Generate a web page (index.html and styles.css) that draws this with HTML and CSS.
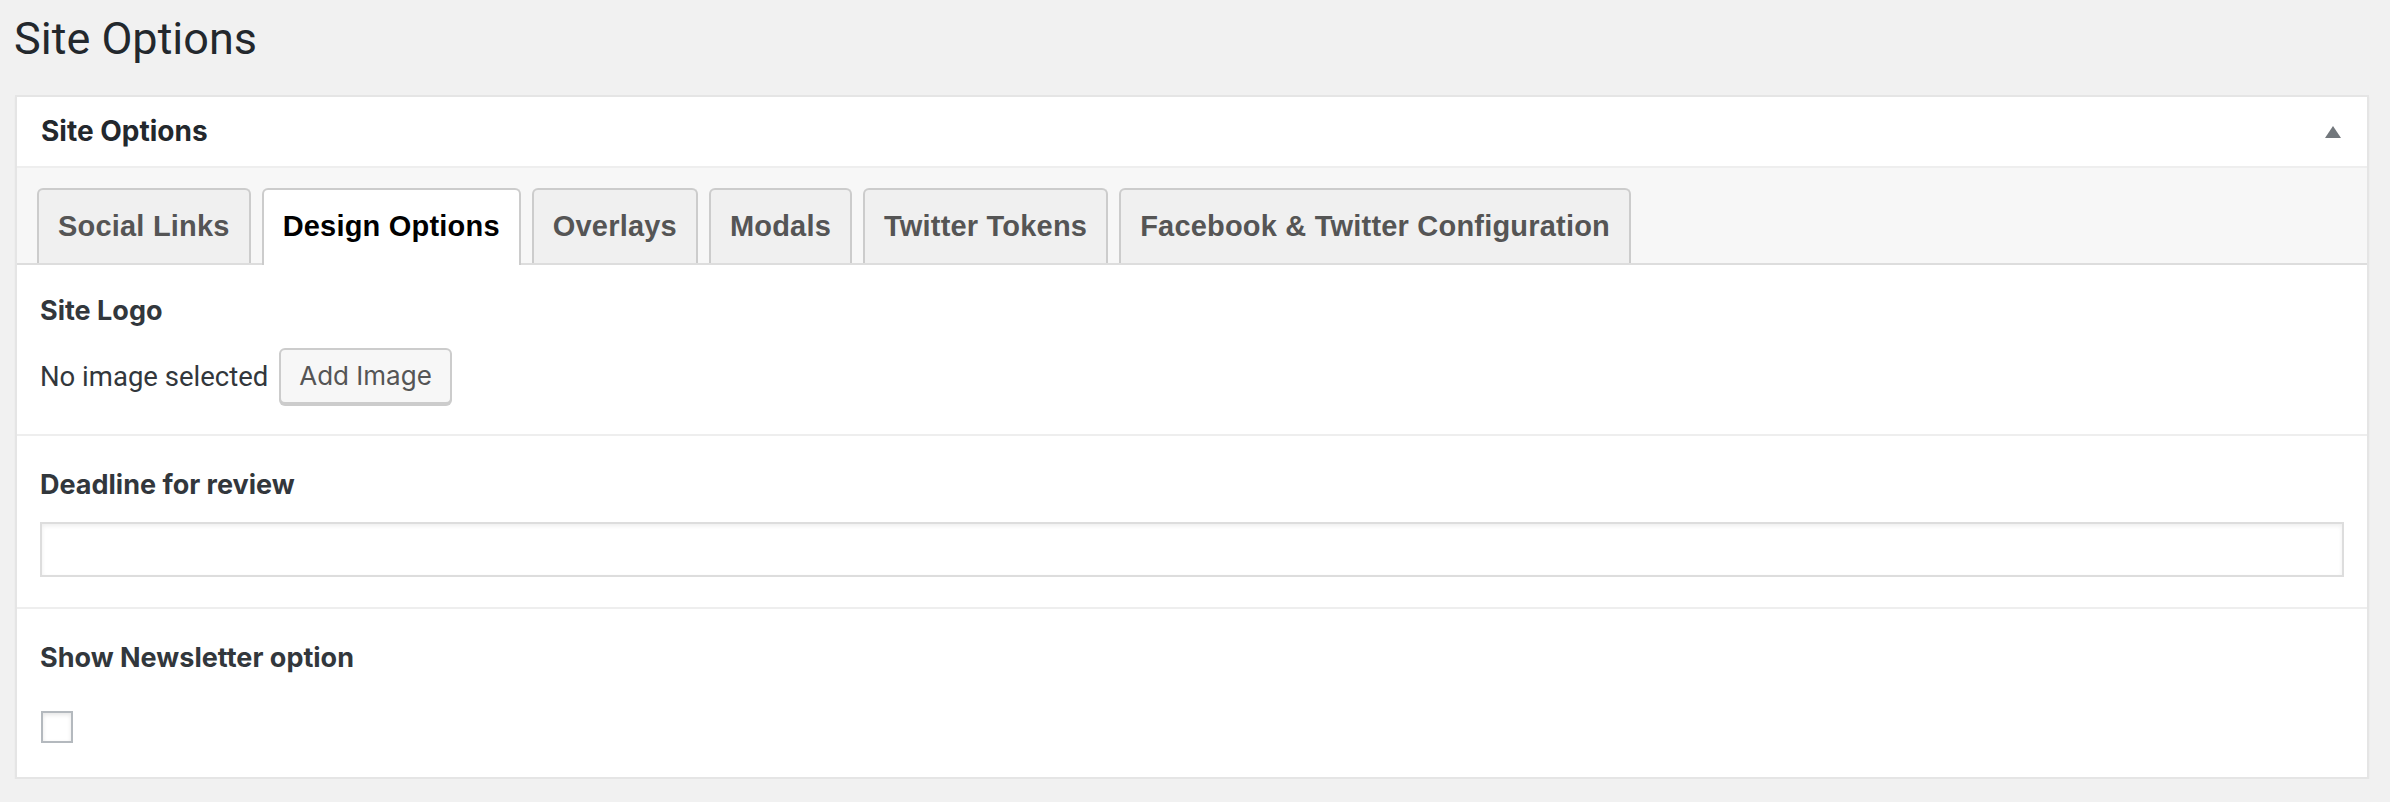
FILE: index.html
```html
<!DOCTYPE html>
<html lang="en">
<head>
<meta charset="utf-8">
<title>Site Options</title>
<link rel="stylesheet" href="styles.css">
</head>
<body>
<div class="wrap">
  <h1 class="page-title">Site Options</h1>
  <div class="postbox">
    <div class="postbox-header">
      <h2 class="hndle">Site Options</h2>
      <svg class="toggle" width="16" height="12" viewBox="0 0 16 12" aria-hidden="true"><polygon points="8,0 16,12 0,12" fill="#72777c"/></svg>
    </div>
    <div class="tabs">
      <span class="tab">Social Links</span>
      <span class="tab tab-active">Design Options</span>
      <span class="tab">Overlays</span>
      <span class="tab">Modals</span>
      <span class="tab">Twitter Tokens</span>
      <span class="tab">Facebook &amp; Twitter Configuration</span>
    </div>
    <div class="field field-first">
      <label class="field-label">Site Logo</label>
      <div class="media-row">
        <span class="media-status">No image selected</span>
        <button class="button" type="button">Add Image</button>
      </div>
    </div>
    <div class="field field-text">
      <label class="field-label">Deadline for review</label>
      <input class="text-input" type="text">
    </div>
    <div class="field field-check">
      <label class="field-label">Show Newsletter option</label>
      <input class="checkbox" type="checkbox">
    </div>
  </div>
</div>
</body>
</html>
```
FILE: styles.css
```css
* { box-sizing: border-box; }
html, body { margin: 0; padding: 0; }
body {
  background: #f1f1f1;
  font-family: Inter, "Liberation Sans", Arial, sans-serif;
  color: #444;
}
.wrap {
  padding: 9px 21px 0 15px;
}
.page-title {
  margin: 0 0 26px -1px;
  font-family: Roboto, "Liberation Sans", Arial, sans-serif;
  font-size: 45px;
  line-height: 60px;
  font-weight: 400;
  color: #23282d;
}
.postbox {
  background: #fff;
  border: 2px solid #e5e5e5;
  box-shadow: 0 2px 2px rgba(0,0,0,.04);
}
.postbox-header {
  display: flex;
  align-items: center;
  justify-content: space-between;
  height: 71px;
  padding: 0 26px 0 24px;
  border-bottom: 2px solid #eee;
}
.hndle {
  margin: 0;
  font-size: 28px;
  line-height: 69px;
  font-weight: 700;
  color: #23282d;
}
.toggle { display: block; margin-top: 1px; }
.tabs {
  display: flex;
  align-items: flex-end;
  gap: 11px;
  padding: 20px 0 0 20px;
  background: #f7f7f7;
  border-bottom: 2px solid #ddd;
}
.tab {
  display: block;
  height: 75px;
  padding: 0 19px;
  border: 2px solid #ccc;
  border-bottom: 0;
  border-radius: 6px 6px 0 0;
  background: #f0f0f0;
  font-family: "Liberation Sans", Arial, sans-serif;
  font-size: 29px;
  letter-spacing: 0.2px;
  line-height: 73px;
  font-weight: 700;
  color: #555;
  white-space: nowrap;
}
.tab-active {
  height: 77px;
  margin-bottom: -2px;
  background: #fff;
  color: #000;
}
.field {
  padding: 29px 23px 30px;
  border-top: 2px solid #eee;
}
.field-first {
  border-top: 0;
  padding-top: 26px;
  padding-bottom: 28px;
}
.field-check { padding-bottom: 34px; }
.field-label {
  display: block;
  font-size: 27px;
  line-height: 40px;
  font-weight: 700;
  color: #32373c;
}
.media-row {
  display: flex;
  align-items: center;
  gap: 11px;
  margin-top: 17px;
}
.media-status {
  font-family: Roboto, "Liberation Sans", Arial, sans-serif;
  font-size: 27.5px;
  line-height: 40px;
  color: #32373c;
}
.button {
  height: 56px;
  padding: 0 18px;
  border: 2px solid #ccc;
  border-radius: 6px;
  background: #f7f7f7;
  box-shadow: 0 2px 0 #ccc;
  font-family: inherit;
  font-size: 26px;
  line-height: 50px;
  color: #555;
  margin-bottom: 2px;
}
.text-input {
  display: block;
  width: 100%;
  height: 55px;
  margin-top: 17px;
  border: 2px solid #ddd;
  border-radius: 0;
  background: #fff;
  box-shadow: inset 0 2px 4px rgba(0,0,0,.07);
  font-family: inherit;
  font-size: 28px;
}
.checkbox {
  -webkit-appearance: none;
  appearance: none;
  display: block;
  width: 32px;
  height: 32px;
  margin: 33px 0 0 1px;
  border: 2px solid #b4b9be;
  border-radius: 0;
  background: #fff;
  box-shadow: inset 0 2px 4px rgba(0,0,0,.1);
}
```
